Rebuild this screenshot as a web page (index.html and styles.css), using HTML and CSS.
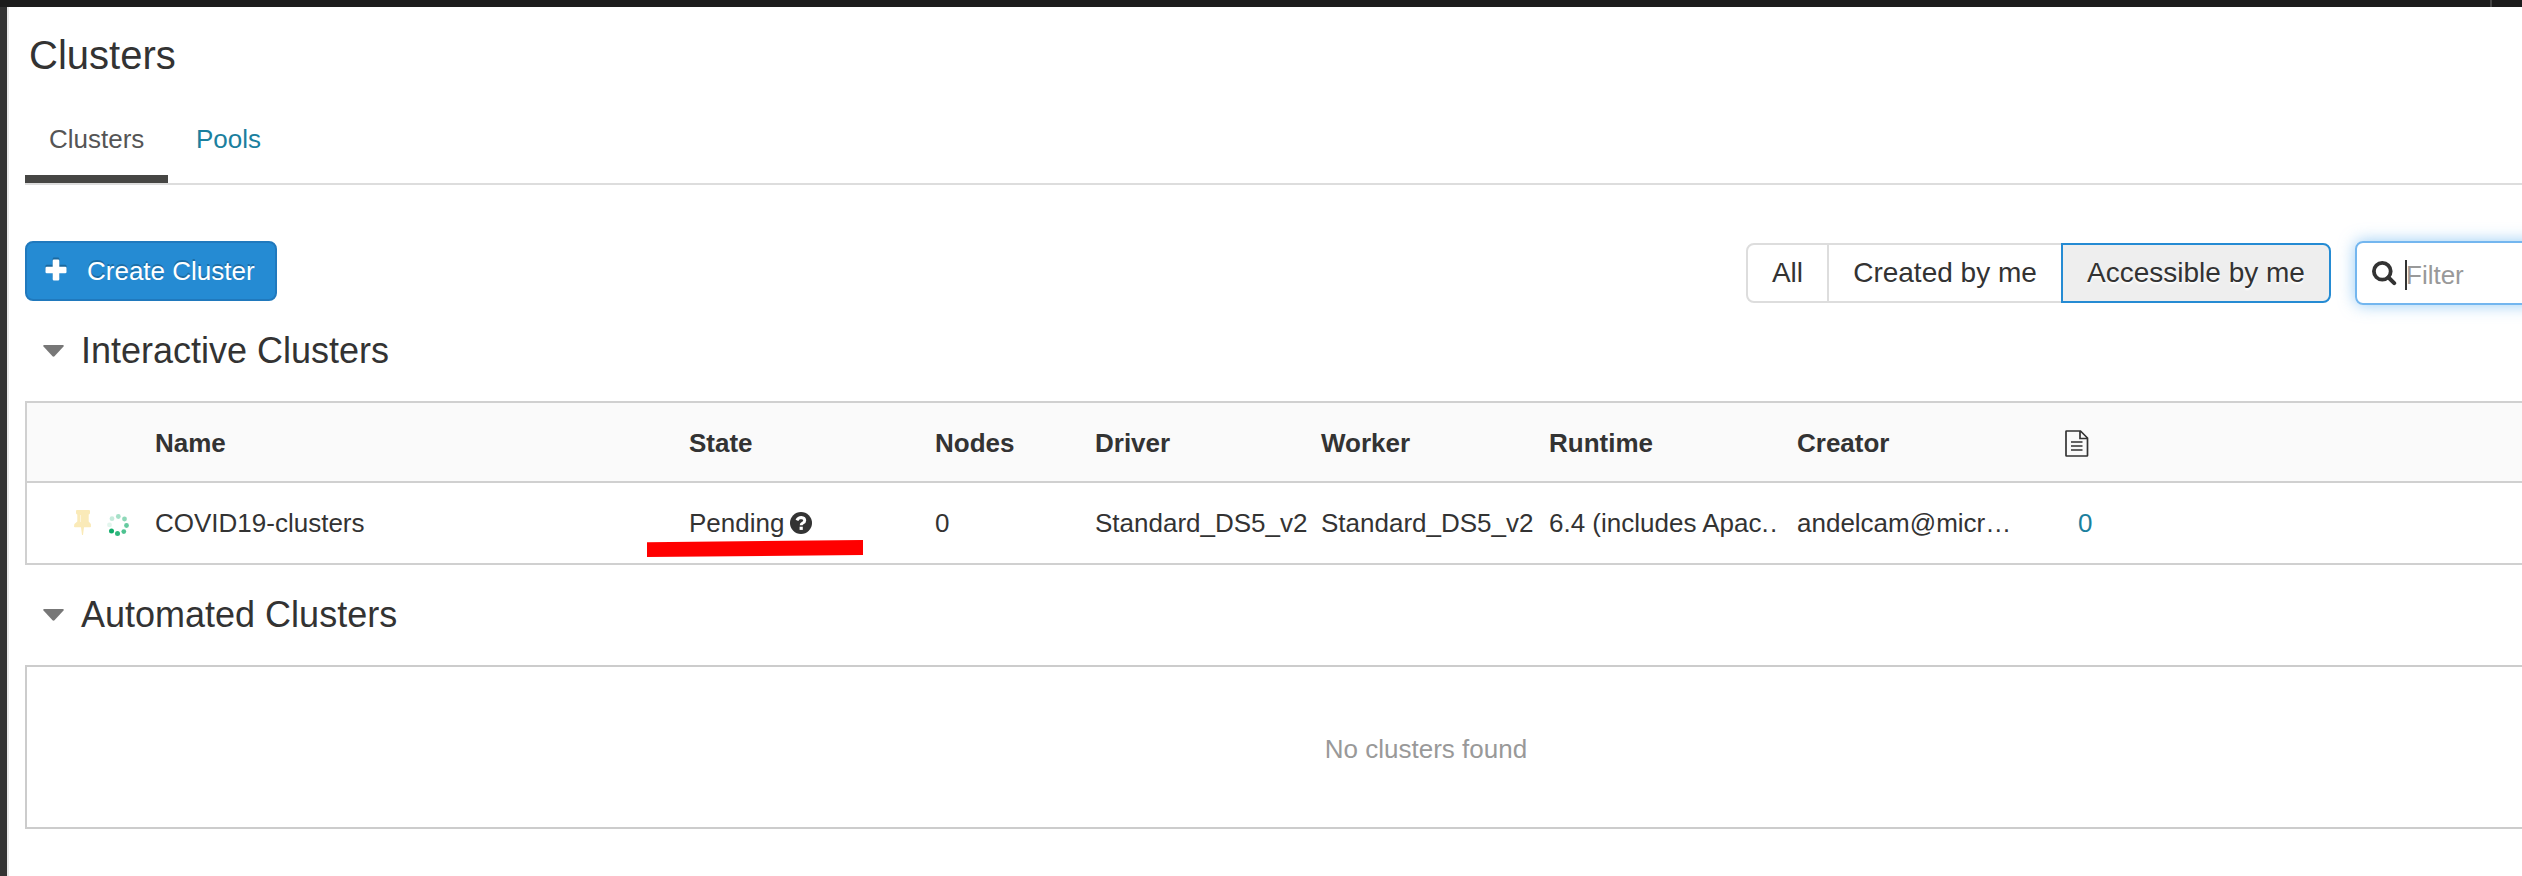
FILE: index.html
```html
<!DOCTYPE html>
<html lang="en">
<head>
<meta charset="utf-8">
<title>Clusters</title>
<link rel="stylesheet" href="styles.css">
</head>
<body>
<div class="topbar"><span class="topbar-divider"></span></div>
<div class="shell">
  <aside class="rail"></aside>
  <main class="content">
    <h1 class="title">Clusters</h1>
    <nav class="tabs">
      <a class="tab active">Clusters</a>
      <a class="tab">Pools</a>
    </nav>
    <div class="toolbar">
      <button class="create">
        <svg class="plus" width="22" height="22" viewBox="0 0 22 22"><path d="M9 .5h4a1.3 1.3 0 0 1 1.300 1.300V7.700H20.200a1.300 1.300 0 0 1 1.300 1.300v4a1.300 1.300 0 0 1-1.300 1.300H14.300V20.200a1.300 1.300 0 0 1-1.300 1.300H9a1.300 1.300 0 0 1-1.300-1.300V14.300H1.800A1.300 1.300 0 0 1 .5 13V9a1.300 1.300 0 0 1 1.300-1.300H7.700V1.800A1.300 1.300 0 0 1 9 .5z" fill="#fff"/></svg>
        <span>Create Cluster</span>
      </button>
      <div class="segments">
        <span class="segment all">All</span>
        <span class="segment mine">Created by me</span>
        <span class="segment access">Accessible by me</span>
      </div>
      <div class="filter">
        <svg width="25" height="25" viewBox="0 0 25 25"><circle cx="10.300" cy="10.300" r="8.400" fill="none" stroke="#333" stroke-width="3.800"/><path d="M16.500 16.500l5.700 5.700" stroke="#333" stroke-width="4" stroke-linecap="round"/></svg>
        <span class="caret"></span>
        <span class="placeholder">Filter</span>
      </div>
    </div>
    <h2 class="section"><svg class="arrow" width="21" height="12" viewBox="0 0 21 12"><path d="M1 0h19q1.200.3.500 1.500L11.500 11.300q-1 .8-2 0L.5 1.500Q-.2.300 1 0z" fill="#777"/></svg>Interactive Clusters</h2>
    <div class="table">
      <div class="row head">
        <span></span><span>Name</span><span>State</span><span>Nodes</span><span>Driver</span><span>Worker</span><span>Runtime</span><span>Creator</span>
        <span class="doc"><svg width="24" height="27" viewBox="0 0 24 27"><path d="M1 1.500Q1 1 1.500 1H15.500L22.500 8V25.500Q22.500 26 22 26H1.500Q1 26 1 25.500zM15 1V8.500H22.500M6 12H17.500M6 16H17.500M6 20H17.500" fill="none" stroke="#333" stroke-width="1.700"/></svg></span>
      </div>
      <div class="row">
        <span class="status">
          <svg width="17" height="26" viewBox="0 0 17 26"><path d="M3 0H15Q16 0 16 1V3Q16 4.300 14.700 4.500V11.500Q17 13 17 16.500Q17 17.300 16 17.300H10L9 25H8L7 17.300H1Q0 17.300 0 16.500Q.3 13 3.300 11.500V4.500Q2 4.300 2 3V1Q2 0 3 0z" fill="#faeab8"/><path d="M6.500 5v7" stroke="#fdf5dc" stroke-width="1"/></svg>
          <svg width="22" height="22" viewBox="0 0 22 22"><g fill="#12ad6b"><circle cx="11.300" cy="2.500" r="2.400" opacity=".38"/><circle cx="17.500" cy="5" r="2.400" opacity=".48"/><circle cx="19.500" cy="11.500" r="2.400" opacity=".65"/><circle cx="16.800" cy="17.600" r="2.400" opacity=".75"/><circle cx="10.500" cy="19.500" r="2.500" opacity=".88"/><circle cx="4.500" cy="16.900" r="2.500"/><circle cx="2.500" cy="10.900" r="2.400" opacity=".12"/><circle cx="5" cy="4.700" r="2.400" opacity=".24"/></g></svg>
        </span>
        <span>COVID19-clusters</span>
        <span class="state">Pending<svg class="help" width="22" height="22" viewBox="0 0 22 22"><circle cx="11" cy="11" r="11" fill="#333"/><path d="M6.900 8.300Q8.300 5.400 11.300 5.400Q14.700 5.600 14.700 8.400Q14.700 10 12.800 11Q11.200 11.800 11.200 13.200" fill="none" stroke="#fff" stroke-width="3"/><path d="M9.600 14.700h3.200v3.200H9.600z" fill="#fff"/></svg></span>
        <span>0</span>
        <span>Standard_DS5_v2</span>
        <span>Standard_DS5_v2</span>
        <span>6.4 (includes Apac<span class="dots">..</span></span>
        <span>andelcam@micr…</span>
        <span class="count">0</span>
        <svg class="marker" width="216" height="18" viewBox="0 0 216 18"><path d="M0 2.300L216 0V15L0 17z" fill="#f00"/></svg>
      </div>
    </div>
    <h2 class="section second"><svg class="arrow" width="21" height="12" viewBox="0 0 21 12"><path d="M1 0h19q1.200.3.500 1.500L11.500 11.300q-1 .8-2 0L.5 1.500Q-.2.300 1 0z" fill="#777"/></svg>Automated Clusters</h2>
    <div class="empty">No clusters found</div>
  </main>
</div>
</body>
</html>
```
FILE: styles.css
```css
* { box-sizing: border-box; }
body {
  margin: 0;
  height: 876px;
  overflow: hidden;
  background: #fff;
  color: #333;
  font: 26px/40px "Liberation Sans", Arial, sans-serif;
}
.topbar { height: 7px; background: #1c1c1c; display: flex; justify-content: flex-end; padding-right: 30px; }
.topbar-divider { width: 2px; background: #444; }
.shell { display: flex; height: 869px; overflow: hidden; }
.rail { flex: none; width: 9px; background: #333; border-right: 2px solid #e8e8e8; }
.content { flex: none; width: 2816px; padding-left: 16px; }
.title { margin: 0; padding: 28px 0 0 4px; font-size: 40px; line-height: 40px; font-weight: 400; }
.tabs { display: flex; margin-top: 24px; height: 86px; border-bottom: 2px solid #ddd; }
.tab { padding: 20px 24px; color: #1b809e; }
.tab.active { width: 143px; border-bottom: 8px solid #464644; color: #555; }
.tab + .tab { padding-left: 28px; }
.toolbar { display: flex; align-items: flex-start; height: 62px; margin-top: 56px; }
.create {
  display: flex; align-items: center; gap: 20px;
  width: 252px; height: 60px; padding: 0 0 0 18px;
  border: 2px solid #2079bd; border-radius: 8px;
  background: #258bd3; color: #fff;
  font: inherit; text-shadow: 0 -2px 0 rgba(0,0,0,.22);
}
.plus { filter: drop-shadow(0 -2px 0 rgba(0,0,0,.25)); margin-bottom: 3px; }
.segments { display: flex; margin: 2px 0 0 1469px; font-size: 28px; line-height: 56px; }
.segment { height: 60px; border: 2px solid #ddd; text-align: center; white-space: nowrap; }
.all { width: 83px; border-radius: 8px 0 0 8px; }
.mine { width: 232px; border-width: 2px 0; }
.access { width: 270px; border-color: #258bd3; border-radius: 0 8px 8px 0; background: #eee; text-shadow: 0 2px 2px #fff; }
.filter {
  display: flex; align-items: center; width: 440px; height: 64px; margin-left: 24px; padding-left: 15px;
  border: 2px solid #73b6ef; border-radius: 8px; box-shadow: 0 0 16px rgba(82,168,236,.6);
}
.caret { width: 2px; height: 30px; margin: 3px 0 0 8px; background: #333; }
.placeholder { margin-left: -1px; padding-top: 3px; color: #999; }
.section { display: flex; align-items: center; gap: 17px; height: 48px; margin: 24px 0 26px; padding-left: 18px; font-size: 36px; font-weight: 400; }
.table { border: 2px solid #d0d0d0; }
.row {
  position: relative; display: grid; align-items: center; height: 80px; white-space: nowrap;
  grid-template-columns: 128px 534px 246px 160px 226px 228px 248px 266px 1fr;
}
.head { padding-top: 2px; border-bottom: 2px solid #d0d0d0; background: #fafafa; font-weight: 700; }
.doc { display: flex; padding-left: 2px; }
.status { display: flex; align-items: center; gap: 16px; padding-left: 47px; }
.status svg:last-child { margin-top: 4px; }
.state { display: flex; align-items: center; }
.help { margin-left: 6px; }
.dots { letter-spacing: 1.4px; }
.count { padding-left: 15px; color: #1b809e; }
.marker { position: absolute; left: 620px; top: 57px; }
.second { margin-top: 26px; margin-bottom: 26px; }
.empty { height: 164px; padding-left: 2px; border: 2px solid #ccc; line-height: 164px; text-align: center; color: #999; }
```
